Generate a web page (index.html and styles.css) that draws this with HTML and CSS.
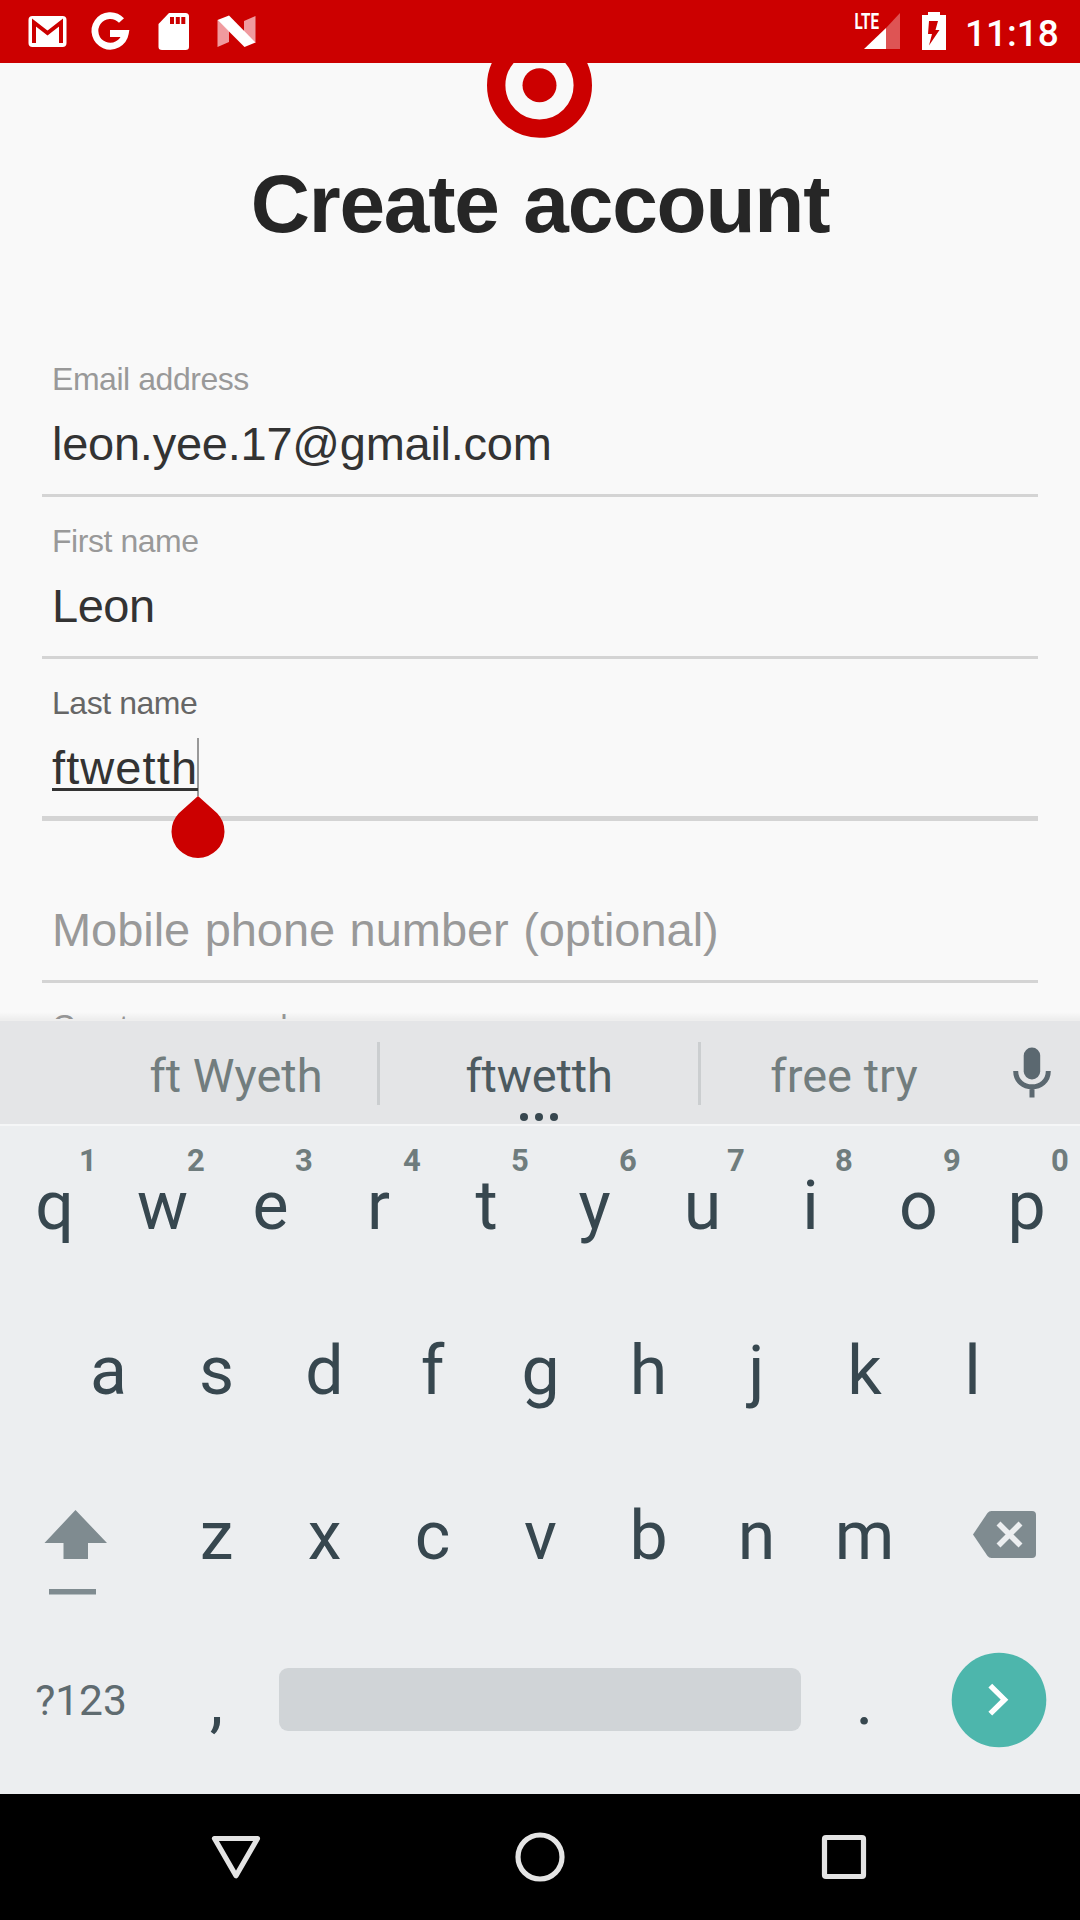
FILE: index.html
```html
<!DOCTYPE html>
<html lang="en">
<head>
<meta charset="utf-8">
<title>Create account</title>
<link rel="stylesheet" href="styles.css">
</head>
<body>
<div class="phone">
  <header class="status">
    <svg class="status-left" width="270" height="63" viewBox="0 0 270 63">
      <rect x="28.500" y="16" width="38" height="31" rx="4" fill="#fff"/>
      <path d="M34 43V22.500L47.500 33 61 22.500V43" fill="none" stroke="#c00" stroke-width="4"/>
      <path d="M121.500 20.500A15.300 15.300 0 1 0 125.300 33.500H110" fill="none" stroke="#fff" stroke-width="6.800"/>
      <path d="M169 13H185.500Q189 13 189 16.500V47Q189 50 185.500 50H162Q158.500 50 158.500 47V24Z" fill="#fff"/>
      <path d="M170 17h4v7h-4zM175.800 17h4v7h-4zM181.300 17h4v7h-4z" fill="#c00"/>
      <path d="M217.500 20L229 31V42L217.500 47ZM255.500 16V43L244 32V21Z" fill="#f09a9e"/>
      <path d="M217.500 20L229 15.500 255.500 42.500 244.500 47Z" fill="#fff"/>
    </svg>
    <svg class="status-right" width="110" height="63" viewBox="850 0 110 63">
      <text class="lte" x="854.500" y="29" textLength="24.500" lengthAdjust="spacingAndGlyphs">LTE</text>
      <path d="M886 28L900 13V49H886Z" fill="#de5454"/>
      <path d="M886 28V49H864Z" fill="#fff"/>
      <path d="M922 15H928V12H940V15H946V50H922Z" fill="#fff"/>
      <path d="M929 21H938L935.500 30H939.500L929 45.500 932 34H928Z" fill="#c00"/>
    </svg>
    <span class="clock">11:18</span>
  </header>

  <main class="page">
    <svg class="logo" width="106" height="75" viewBox="0 31 106 75">
      <circle cx="52.500" cy="53.300" r="43.300" fill="none" stroke="#c00" stroke-width="18.400"/>
      <circle cx="52.500" cy="53.300" r="17" fill="#c00"/>
    </svg>
    <h1 class="title">Create account</h1>
    <form class="form">
      <div class="field"><label class="label">Email address</label><div class="value"><span class="email">leon.yee.17@gmail.com</span></div></div>
      <div class="field"><label class="label">First name</label><div class="value first-name">Leon</div></div>
      <div class="field active"><label class="label">Last name</label><div class="value"><span class="composing">ftwetth<span class="caret"></span><svg class="handle" width="54" height="63" viewBox="0 0 54 63"><path d="M27 0L46.200 17.200A26.500 26.500 0 1 1 7.800 17.200Z" fill="#c00"/></svg></span></div></div>
      <div class="field"><label class="label"></label><div class="value hint">Mobile phone number (optional)</div></div>
      <div class="field next"><label class="label">Create password</label></div>
    </form>
  </main>

  <section class="keyboard">
    <div class="strip">
      <span class="suggestion first">ft Wyeth</span>
      <span class="suggestion best">ftwetth<svg class="dots" width="40" height="10" viewBox="0 0 40 10"><circle cx="5" cy="5" r="4"/><circle cx="20" cy="5" r="4"/><circle cx="35" cy="5" r="4"/></svg></span>
      <span class="suggestion last">free try</span>
      <svg class="mic" width="93" height="103" viewBox="987 1021 93 103">
        <rect x="1023.700" y="1047.500" width="16.500" height="32" rx="8.200" fill="#5b6870"/>
        <path d="M1015.700 1071C1015.700 1092 1048.300 1092 1048.300 1071M1032 1086V1097.500" fill="none" stroke="#5b6870" stroke-width="5"/>
      </svg>
    </div>
    <div class="row top">
      <span class="key">q<sup class="num">1</sup></span><span class="key">w<sup class="num">2</sup></span><span class="key">e<sup class="num">3</sup></span><span class="key">r<sup class="num">4</sup></span><span class="key">t<sup class="num">5</sup></span><span class="key">y<sup class="num">6</sup></span><span class="key">u<sup class="num">7</sup></span><span class="key">i<sup class="num">8</sup></span><span class="key">o<sup class="num">9</sup></span><span class="key">p<sup class="num">0</sup></span>
    </div>
    <div class="row">
      <span class="key">a</span><span class="key">s</span><span class="key">d</span><span class="key">f</span><span class="key">g</span><span class="key">h</span><span class="key">j</span><span class="key">k</span><span class="key">l</span>
    </div>
    <div class="row">
      <svg class="wide" width="162" height="165" viewBox="0 1453 162 165">
        <path d="M75.500 1510L107 1543H88V1559H63.500V1543H44.500ZM49 1589H96V1594.500H49Z" fill="#7f8b90"/>
      </svg>
      <span class="key">z</span><span class="key">x</span><span class="key">c</span><span class="key">v</span><span class="key">b</span><span class="key">n</span><span class="key">m</span>
      <svg class="wide" width="162" height="165" viewBox="918 1453 162 165">
        <path d="M991.500 1511H1032Q1036 1511 1036 1515V1554Q1036 1558 1032 1558H991.500Q989 1558 987.500 1556L973 1534.500 987.500 1513Q989 1511 991.500 1511Z" fill="#7f8b90"/>
        <path d="M998.500 1523.500L1020.500 1545.500M1020.500 1523.500L998.500 1545.500" stroke="#eceef0" stroke-width="5.600"/>
      </svg>
    </div>
    <div class="row">
      <span class="symbols">?123</span>
      <span class="key">,</span>
      <span class="space"></span>
      <span class="key">.</span>
      <svg class="wide" width="162" height="165" viewBox="918 1618 162 165">
        <circle cx="999" cy="1700" r="47.300" fill="#4db6ac"/>
        <path d="M990.300 1685.700L1004.500 1699.700 990.300 1713.700" fill="none" stroke="#fff" stroke-width="5.400"/>
      </svg>
    </div>
  </section>

  <nav class="nav">
    <svg width="60" height="60" viewBox="0 0 60 60"><path d="M8.500 11.500H51.500L30 48.800Z"/></svg>
    <svg width="60" height="60" viewBox="0 0 60 60"><circle cx="30" cy="30" r="22"/></svg>
    <svg width="60" height="60" viewBox="0 0 60 60"><rect x="10.500" y="10.500" width="39" height="39" rx="1.500"/></svg>
  </nav>
</div>
</body>
</html>
```
FILE: styles.css
```css
* { box-sizing: border-box; }
body { margin: 0; background: #000; }
svg { display: block; flex: none; }
.phone {
  display: flex;
  flex-direction: column;
  width: 1080px;
  height: 1920px;
  overflow: hidden;
  font-family: "Liberation Sans", Arial, sans-serif;
}

/* Status bar */
.status {
  display: flex;
  height: 63px;
  flex: none;
  background: #c00;
  color: #fff;
}
.status-right { margin-left: 580px; }
.lte { font: 700 22.500px Roboto, sans-serif; fill: #fff; }
.clock {
  margin-left: 5px;
  font: 500 37px/67px Roboto, sans-serif;
  white-space: nowrap;
}

/* Sign-up form */
.page {
  display: flex;
  flex-direction: column;
  align-items: center;
  height: 958px;
  flex: none;
  overflow: hidden;
  background: #f9f9f9;
}
.logo { flex: none; }
.title {
  margin: 17px 0 0;
  height: 180px;
  flex: none;
  font-size: 82px;
  line-height: 98px;
  letter-spacing: -1.200px;
  word-spacing: 3px;
  color: #262626;
}
.form { width: 996px; flex: none; }
.field {
  height: 162px;
  padding: 24px 10px 0;
  border-bottom: 3px solid #d4d4d4;
  color: #999;
}
.field.active { border-bottom-width: 5px; }
.field.next { padding-top: 23px; }
.label {
  display: block;
  height: 40px;
  margin-bottom: 15px;
  font-size: 32px;
  line-height: 40px;
  letter-spacing: -0.450px;
}
.active .label { color: #666; }
.value {
  font-size: 47px;
  line-height: 60px;
  color: #333;
}
.email { letter-spacing: -0.250px; }
.first-name { letter-spacing: -0.500px; }
.hint { color: #999; word-spacing: 1.500px; letter-spacing: -0.050px; }
.composing {
  position: relative;
  display: inline-block;
  height: 60px;
  letter-spacing: 1.100px;
}
.composing::after {
  content: "";
  position: absolute;
  left: 0;
  right: 0;
  top: 50px;
  height: 3px;
  background: #333;
}
.caret {
  position: absolute;
  right: -1px;
  top: 0;
  width: 2px;
  height: 58px;
  background: #999;
}
.handle { position: absolute; right: -27px; top: 58px; }

/* Keyboard */
.keyboard {
  position: relative;
  height: 773px;
  flex: none;
  background: #eceef0;
  color: #37474f;
  font-family: Roboto, sans-serif;
}
.keyboard::before {
  content: "";
  position: absolute;
  left: 0;
  right: 0;
  top: -9px;
  height: 9px;
  background: linear-gradient(rgba(0, 0, 0, 0), rgba(0, 0, 0, 0.045) 78%, #eee 78%);
}
.strip {
  display: flex;
  height: 105px;
  padding-left: 93px;
  background: #e4e5e7;
  border-bottom: 2px solid #f5f6f7;
}
.suggestion {
  position: relative;
  padding-top: 7px;
  font-size: 47px;
  line-height: 96px;
  text-align: center;
  color: #727d7e;
}
.suggestion.first { width: 284px; padding-left: 2px; }
.suggestion.best { width: 324px; letter-spacing: -0.200px; color: #4c5a60; }
.suggestion.last { width: 286px; }
.best::before, .best::after {
  content: "";
  position: absolute;
  top: 21px;
  width: 3px;
  height: 63px;
  background: #cbced0;
}
.best::before { left: 0; }
.best::after { right: 0; }
.dots { position: absolute; left: 141.500px; top: 91px; fill: #37474f; }
.row {
  display: flex;
  justify-content: center;
  height: 165px;
  line-height: 167px;
}
.row.top { height: 162px; line-height: 161px; }
.key {
  position: relative;
  width: 108px;
  padding-left: 1px;
  font-size: 68px;
  text-align: center;
}
.num {
  position: absolute;
  left: 68px;
  top: 19px;
  width: 40px;
  font-size: 31px;
  font-weight: 700;
  line-height: 32px;
  color: #6f7c7d;
}
.symbols {
  width: 162px;
  font-size: 42.500px;
  line-height: 165px;
  text-align: center;
  color: #5f6b70;
}
.space {
  width: 522px;
  height: 63px;
  margin: 50px 9px 0;
  border-radius: 9px;
  background: #d0d4d7;
}

/* Navigation bar */
.nav {
  display: flex;
  justify-content: center;
  align-items: center;
  gap: 244px;
  height: 126px;
  flex: none;
  background: #000;
}
.nav svg { fill: none; stroke: #e4e4e4; stroke-width: 5.200; stroke-linejoin: round; }
```
